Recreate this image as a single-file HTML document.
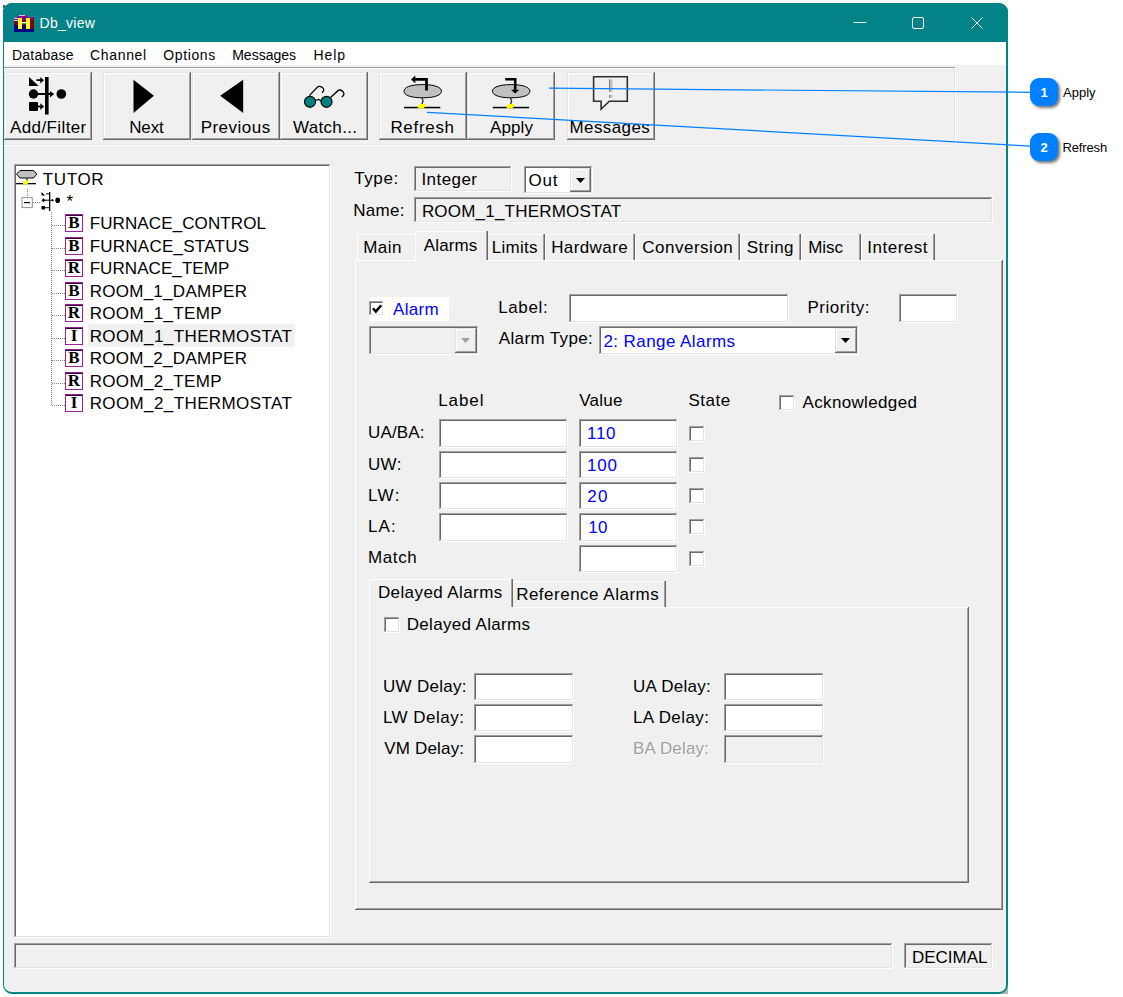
<!DOCTYPE html><html><head><meta charset="utf-8"><title>Db_view</title><style>
html,body{margin:0;padding:0;background:#fff;}
body{width:1123px;height:997px;position:relative;overflow:hidden;font-family:"Liberation Sans",sans-serif;font-size:17px;color:#000;}
div,span,svg{position:absolute;box-sizing:border-box;}
.t{white-space:nowrap;line-height:20px;height:20px;}
.win{left:3px;top:3px;width:1005px;height:991px;background:#f0f0f0;border-radius:9px;overflow:hidden;}
.winb{left:3px;top:3px;width:1005px;height:991px;border:1px solid #038387;border-right-width:2px;border-bottom-width:2px;border-radius:9px;}
.title{left:0;top:0;width:1005px;height:39px;background:#038387;}
.menu{left:0;top:39px;width:1005px;height:22.5px;background:#fff;}
.sunk{box-shadow:inset -1px -1px 0 #fff,inset 1px 1px 0 #a0a0a0,inset -2px -2px 0 #e3e3e3,inset 2px 2px 0 #696969;}
.w{background:#fff;}
.g{background:#f0f0f0;}
.btn{background:#f0f0f0;box-shadow:inset -1px -1px 0 #696969,inset 1px 1px 0 #e3e3e3,inset -2px -2px 0 #a0a0a0,inset 2px 2px 0 #fff;}
.cb{background:#fff;box-shadow:inset -1px -1px 0 #fff,inset 1px 1px 0 #a0a0a0,inset -2px -2px 0 #e3e3e3,inset 2px 2px 0 #696969;}
.panel{background:#f0f0f0;box-shadow:inset -1px -1px 0 #696969,inset 1px 1px 0 #fff,inset -2px -2px 0 #a0a0a0;}
.tabr{box-shadow:inset -1px 0 0 #696969,inset -2px 0 0 #a0a0a0,inset 0 1px 0 #fff, inset 1px 0 0 #fff;background:#f0f0f0;}
.tabl{box-shadow:inset 0 1px 0 #fff, inset 1px 0 0 #fff;background:#f0f0f0;}
.ic{background:#fff;border:1px solid #9a1f9a;box-shadow:inset 0 1px 0 #300030;font-family:"Liberation Serif",serif;font-weight:bold;font-size:17px;line-height:16px;text-align:center;color:#000;}
.dot{border-top:1px dotted #808080;height:0;}
.vdot{border-left:1px dotted #808080;width:0;}
.call{background:#0080ff;border-radius:9px;box-shadow:2px 2px 3px rgba(0,0,0,.55);color:#fff;font-weight:bold;font-size:13px;text-align:center;line-height:29px;}
</style></head><body>
<div class="" style="left:1001px;top:987px;width:7px;height:7px;background:#b4b4b4;"></div>
<div class="" style="left:3px;top:5px;width:2px;height:3px;background:#554;"></div>
<div class="win"><div class="title"></div><div class="menu"></div></div>
<svg style="left:14px;top:12px" width="20" height="20" viewBox="0 0 20 20" shape-rendering="crispEdges">
<rect width="20" height="20" fill="#008080"/>
<path d="M5 3h6l2 2h7v3H0V6h3z" fill="#8b008b"/>
<rect x="5" y="3" width="6" height="1" fill="#f0c0f0"/>
<rect x="0" y="6" width="4" height="1" fill="#f0c0f0"/>
<rect x="0" y="8" width="20" height="5" fill="#800000"/>
<rect x="0" y="13" width="20" height="7" fill="#000080"/>
<rect x="16" y="7" width="4" height="10" fill="#800000"/>
<rect x="0" y="8" width="4" height="1" fill="#f0c0f0"/>
<rect x="4" y="6" width="4" height="11" fill="#ffff00"/>
<rect x="12" y="6" width="4" height="11" fill="#ffff00"/>
<rect x="8" y="9" width="4" height="1" fill="#800000"/>
<rect x="8" y="10" width="4" height="1" fill="#fff"/>
<rect x="8" y="11" width="4" height="1" fill="#40a040"/>
<rect x="6" y="8" width="1" height="8" fill="#ffffc0"/>
<rect x="14" y="8" width="1" height="8" fill="#ffffc0"/>
</svg>
<span class="t" style="left:39.58px;top:13px;font-size:14px;color:#fff;letter-spacing:0.26px;">Db_view</span>
<svg style="left:850px;top:10px" width="150" height="30" viewBox="0 0 150 30" fill="none" stroke="#fff" stroke-width="1">
<path d="M3.500 12.500h13"/>
<rect x="62.500" y="7.500" width="11" height="11" rx="1.500"/>
<path d="M121.500 7.500l11 11M132.500 7.500l-11 11"/>
</svg>
<span class="t" style="left:11.88px;top:45px;font-size:14px;letter-spacing:0.25px;">Database</span>
<span class="t" style="left:90.10px;top:45px;font-size:14px;letter-spacing:0.65px;">Channel</span>
<span class="t" style="left:163.17px;top:45px;font-size:14px;letter-spacing:0.65px;">Options</span>
<span class="t" style="left:232.18px;top:45px;font-size:14px;letter-spacing:0.01px;">Messages</span>
<span class="t" style="left:313.38px;top:45px;font-size:14px;letter-spacing:0.94px;">Help</span>
<div class="" style="left:4px;top:67px;width:951px;height:1px;background:#a0a0a0;"></div>
<div class="" style="left:4px;top:68px;width:950px;height:1px;background:#fbfbfb;"></div>
<div class="" style="left:954px;top:68px;width:1px;height:77px;background:#e0e0e0;"></div>
<div class="" style="left:4px;top:144px;width:951px;height:1px;background:#e4e4e4;"></div>
<div class="" style="left:4px;top:145px;width:952px;height:1px;background:#fff;"></div>
<div class="" style="left:955px;top:67px;width:1px;height:79px;background:#fff;"></div>
<div class="btn" style="left:4px;top:72px;width:88px;height:68px;"></div>
<span class="t" style="left:10.00px;top:118px;letter-spacing:0.39px;">Add/Filter</span>
<div class="btn" style="left:103px;top:72px;width:88px;height:68px;"></div>
<span class="t" style="left:129.14px;top:118px;letter-spacing:-0.11px;">Next</span>
<div class="btn" style="left:191.5px;top:72px;width:88px;height:68px;"></div>
<span class="t" style="left:200.64px;top:118px;letter-spacing:0.48px;">Previous</span>
<div class="btn" style="left:280px;top:72px;width:88px;height:68px;"></div>
<span class="t" style="left:293.00px;top:118px;letter-spacing:0.32px;">Watch...</span>
<div class="btn" style="left:379px;top:72px;width:88px;height:68px;"></div>
<span class="t" style="left:390.39px;top:118px;letter-spacing:0.69px;">Refresh</span>
<div class="btn" style="left:467px;top:72px;width:88px;height:68px;"></div>
<span class="t" style="left:490.00px;top:118px;letter-spacing:0.12px;">Apply</span>
<div class="btn" style="left:567px;top:72px;width:88px;height:68px;"></div>
<span class="t" style="left:569.44px;top:118px;letter-spacing:0.42px;">Messages</span>
<svg style="left:0;top:60px" width="700" height="70" viewBox="0 60 700 70">
<g fill="#000">
<path d="M29 77v9h9.700z"/>
<rect x="36.500" y="79.200" width="5" height="1.800"/>
<path d="M40.300 77l3.600 3.200-3.600 3.200z"/>
<rect x="45" y="77" width="3.600" height="37.500"/>
<circle cx="33.500" cy="94" r="4.700"/>
<rect x="37" y="93" width="14" height="2"/>
<path d="M50 91l4.200 3-4.200 3.500z"/>
<circle cx="61.300" cy="94" r="4.800"/>
<rect x="29" y="102" width="9" height="9" rx="1"/>
<rect x="37" y="105.600" width="4" height="1.800"/>
<path d="M40.300 103.300l3.800 3.200-3.800 3.500z"/>
<path d="M133.500 79.800v33.300l20.400-17.400z"/>
<path d="M243.200 79.800v33.300l-23-17.400z"/>
</g>
<g fill="none" stroke="#000" stroke-width="1.300">
<path d="M309.300 95.600l8.700-9q3-1 5 1.500t-1 4.500"/>
<path d="M330.500 97.400l8-7.200q3-.8 4.800 2t-1.600 4.800"/>
<path d="M315.500 100.500l3-1 4 2"/>
</g>
<circle cx="310" cy="101.800" r="5.500" fill="#008080" stroke="#000" stroke-width="1.200"/>
<circle cx="326.500" cy="101.800" r="5.500" fill="#008080" stroke="#000" stroke-width="1.200"/>

<path d="M404.0 91.2C404.0 87.6 409.7 84.6 422.7 84.6C435.7 84.6 441.4 87.6 441.4 91.2C441.4 94.8 435.7 97.8 422.7 97.8C409.7 97.8 404.0 94.8 404.0 91.2Z" fill="#c0c0c0" stroke="#000" stroke-width="1"/>
<path d="M426.500 90.600v-11.300h-12" fill="none" stroke="#000" stroke-width="2.800"/>
<path d="M415.300 75.600v7.600l-4.300-3.800z" fill="#000"/>
<path d="M422 98l1 3-1 3" fill="none" stroke="#303030" stroke-width="1.400"/>
<rect x="404" y="106.800" width="36.300" height="1.500" fill="#000"/>
<path d="M419.400 104h7.100l-2.800 4.400h-6.200z" fill="#ffff00"/>

<path d="M492.5 91.2C492.5 87.6 498.2 84.6 511.2 84.6C524.2 84.6 529.9 87.6 529.9 91.2C529.9 94.8 524.2 97.8 511.2 97.8C498.2 97.8 492.5 94.8 492.5 91.2Z" fill="#c0c0c0" stroke="#000" stroke-width="1"/>
<path d="M505.200 79.300h10v11" fill="none" stroke="#000" stroke-width="2.600"/>
<path d="M511 89.800h8.200l-4.100 3.800z" fill="#000"/>
<path d="M510.600 98l1 3-1 3" fill="none" stroke="#303030" stroke-width="1.400"/>
<rect x="492.800" y="106.800" width="36.300" height="1.500" fill="#000"/>
<path d="M508 104h7l-2.500 4.400h-6.300z" fill="#ffff00"/>

<path d="M593.600 76.700h33.700v24.500h-18l-8.200 8v-8h-7.500z" fill="none" stroke="#303030" stroke-width="1.600"/>
<rect x="609" y="79.400" width="1.500" height="12.400" fill="#808080"/><rect x="610.500" y="79.400" width="2" height="12.400" fill="#c0c0c0"/>
<rect x="609" y="95" width="1.500" height="2.800" fill="#808080"/><rect x="610.500" y="95" width="2" height="2.800" fill="#c0c0c0"/>
</svg>
<div class="sunk w" style="left:14px;top:164px;width:317px;height:774px;"></div>
<svg style="left:14px;top:166px" width="60" height="50" viewBox="14 166 60 50">
<path d="M20 170.500h13.500l3.300 3.700-3.300 3.800H20l-3.500-3.800z" fill="#c0c0c0" stroke="#000" stroke-width="1"/>
<rect x="26.300" y="178" width="1.300" height="3" fill="#303030"/>
<rect x="16" y="183" width="20" height="1.300" fill="#000"/>
<path d="M24.300 180.500h4.700l-1.600 4.100h-4.700z" fill="#ffff00"/>
<path d="M27.500 189v8" stroke="#808080" stroke-width="1" stroke-dasharray="1 1" fill="none"/>
<path d="M33 202.500h8" stroke="#808080" stroke-width="1" stroke-dasharray="1 1" fill="none"/>
<rect x="22" y="197.600" width="10.300" height="10" fill="#fff" stroke="#919191" stroke-width="1"/>
<rect x="24" y="202" width="6" height="1.200" fill="#000"/>
<g fill="#000">
<path d="M41.500 192v3.500h3.700z"/>
<rect x="46" y="193.300" width="3" height="1"/>
<rect x="49" y="192" width="1.300" height="19"/>
<path d="M41.500 200.200l2-2 2 2-2 2z"/>
<rect x="45" y="199.700" width="8" height="1"/>
<path d="M52 198.700l2 1.500-2 1.500z"/>
<ellipse cx="57.700" cy="200.200" rx="2.400" ry="2.800"/>
<rect x="41.500" y="206" width="3.500" height="3.500"/>
<rect x="45" y="207.200" width="4" height="1"/>
</g>
</svg>
<span class="t" style="left:42.86px;top:170px;letter-spacing:0.60px;">TUTOR</span>
<span class="t" style="left:66.55px;top:192px;letter-spacing:0.35px;">*</span>
<div class="ic" style="left:65px;top:214px;width:18px;height:18px;">B</div>
<div class="dot" style="left:52px;top:225px;width:13px;height:0px;"></div>
<span class="t" style="left:89.64px;top:214px;letter-spacing:0.12px;">FURNACE_CONTROL</span>
<div class="ic" style="left:65px;top:237px;width:18px;height:18px;">B</div>
<div class="dot" style="left:52px;top:248px;width:13px;height:0px;"></div>
<span class="t" style="left:89.64px;top:237px;letter-spacing:0.25px;">FURNACE_STATUS</span>
<div class="ic" style="left:65px;top:259px;width:18px;height:18px;">R</div>
<div class="dot" style="left:52px;top:270px;width:13px;height:0px;"></div>
<span class="t" style="left:89.64px;top:259px;letter-spacing:0.08px;">FURNACE_TEMP</span>
<div class="ic" style="left:65px;top:282px;width:18px;height:18px;">B</div>
<div class="dot" style="left:52px;top:293px;width:13px;height:0px;"></div>
<span class="t" style="left:89.64px;top:282px;letter-spacing:0.28px;">ROOM_1_DAMPER</span>
<div class="ic" style="left:65px;top:304px;width:18px;height:18px;">R</div>
<div class="dot" style="left:52px;top:315px;width:13px;height:0px;"></div>
<span class="t" style="left:89.64px;top:304px;letter-spacing:0.35px;">ROOM_1_TEMP</span>
<div class="" style="left:88px;top:324px;width:207px;height:23px;background:#f0f0f0;"></div>
<div class="ic" style="left:65px;top:327px;width:18px;height:18px;">I</div>
<div class="dot" style="left:52px;top:338px;width:13px;height:0px;"></div>
<span class="t" style="left:89.64px;top:327px;letter-spacing:0.40px;">ROOM_1_THERMOSTAT</span>
<div class="ic" style="left:65px;top:349px;width:18px;height:18px;">B</div>
<div class="dot" style="left:52px;top:360px;width:13px;height:0px;"></div>
<span class="t" style="left:89.64px;top:349px;letter-spacing:0.28px;">ROOM_2_DAMPER</span>
<div class="ic" style="left:65px;top:372px;width:18px;height:18px;">R</div>
<div class="dot" style="left:52px;top:383px;width:13px;height:0px;"></div>
<span class="t" style="left:89.64px;top:372px;letter-spacing:0.35px;">ROOM_2_TEMP</span>
<div class="ic" style="left:65px;top:394px;width:18px;height:18px;">I</div>
<div class="dot" style="left:52px;top:405px;width:13px;height:0px;"></div>
<span class="t" style="left:89.64px;top:394px;letter-spacing:0.40px;">ROOM_2_THERMOSTAT</span>
<div class="vdot" style="left:51px;top:212px;width:0px;height:193px;"></div>
<span class="t" style="left:354.16px;top:169px;letter-spacing:0.62px;">Type:</span>
<span class="t" style="left:353.14px;top:201px;letter-spacing:0.31px;">Name:</span>
<div class="sunk g" style="left:414px;top:166px;width:98px;height:26px;"></div>
<span class="t" style="left:421.47px;top:170px;letter-spacing:0.43px;">Integer</span>
<div class="sunk w" style="left:524px;top:166px;width:69px;height:28px;"></div>
<span class="t" style="left:528.49px;top:171px;letter-spacing:0.82px;">Out</span>
<div class="btn" style="left:570px;top:168px;width:21px;height:24px;"></div>
<svg style="left:576px;top:178px" width="9" height="5" viewBox="0 0 9 5"><path d="M0 0h9L4.500 5z" fill="#000"/></svg>
<div class="sunk g" style="left:414px;top:197px;width:579px;height:26px;"></div>
<span class="t" style="left:421.89px;top:202px;letter-spacing:0.21px;">ROOM_1_THERMOSTAT</span>
<div class="panel" style="left:355px;top:260px;width:648px;height:650px;"></div>
<div class="tabl" style="left:357px;top:234px;width:57.5px;height:26px;"></div>
<span class="t" style="left:363.14px;top:238px;letter-spacing:0.53px;">Main</span>
<div class="tabr" style="left:487px;top:234px;width:57.5px;height:26px;"></div>
<span class="t" style="left:491.64px;top:238px;letter-spacing:0.32px;">Limits</span>
<div class="tabr" style="left:544.5px;top:234px;width:90.0px;height:26px;"></div>
<span class="t" style="left:551.14px;top:238px;letter-spacing:0.41px;">Hardware</span>
<div class="tabr" style="left:634.5px;top:234px;width:105.0px;height:26px;"></div>
<span class="t" style="left:642.15px;top:238px;letter-spacing:0.52px;">Conversion</span>
<div class="tabr" style="left:739.5px;top:234px;width:61.0px;height:26px;"></div>
<span class="t" style="left:746.74px;top:238px;letter-spacing:0.48px;">String</span>
<div class="tabr" style="left:800.5px;top:234px;width:60.0px;height:26px;"></div>
<span class="t" style="left:808.14px;top:238px;letter-spacing:-0.05px;">Misc</span>
<div class="tabr" style="left:860.5px;top:234px;width:74.0px;height:26px;"></div>
<span class="t" style="left:867.22px;top:238px;letter-spacing:0.52px;">Interest</span>
<div class="tabr" style="left:415px;top:231px;width:73px;height:29px;"></div>
<div class="g" style="left:416px;top:260px;width:70px;height:1px;"></div>
<span class="t" style="left:423.75px;top:236px;letter-spacing:0.14px;">Alarms</span>
<div class="w" style="left:369px;top:297px;width:80px;height:24px;"></div>
<div class="cb" style="left:369px;top:301px;width:15px;height:15px;"></div>
<svg style="left:371px;top:303px" width="12" height="12" viewBox="371 303 12 12"><path d="M373 308.300l2.800 3.300 5.400-6.400" fill="none" stroke="#000" stroke-width="2.400"/></svg>
<span class="t" style="left:393.00px;top:300px;color:#0000ff;letter-spacing:0.29px;">Alarm</span>
<div class="sunk g" style="left:369px;top:326px;width:110px;height:29px;"></div>
<div class="btn" style="left:455px;top:328px;width:22px;height:25px;"></div>
<svg style="left:461px;top:338px" width="9" height="5" viewBox="0 0 9 5"><path d="M0 0h9L4.500 5z" fill="#a0a0a0"/></svg>
<span class="t" style="left:498.14px;top:298px;letter-spacing:0.66px;">Label:</span>
<div class="sunk w" style="left:569px;top:294px;width:220px;height:29px;"></div>
<span class="t" style="left:807.39px;top:298px;letter-spacing:0.56px;">Priority:</span>
<div class="sunk w" style="left:899px;top:294px;width:59px;height:29px;"></div>
<span class="t" style="left:498.75px;top:329px;letter-spacing:0.36px;">Alarm Type:</span>
<div class="sunk w" style="left:599px;top:326px;width:260px;height:29px;"></div>
<span class="t" style="left:603.40px;top:332px;color:#0000ff;letter-spacing:0.43px;">2: Range Alarms</span>
<div class="btn" style="left:835px;top:328px;width:22px;height:25px;"></div>
<svg style="left:841px;top:338px" width="9" height="5" viewBox="0 0 9 5"><path d="M0 0h9L4.500 5z" fill="#000"/></svg>
<span class="t" style="left:438.14px;top:391px;letter-spacing:0.95px;">Label</span>
<span class="t" style="left:579.25px;top:391px;letter-spacing:0.26px;">Value</span>
<span class="t" style="left:688.49px;top:391px;letter-spacing:0.50px;">State</span>
<div class="cb" style="left:779px;top:395px;width:16px;height:16px;"></div>
<span class="t" style="left:802.50px;top:393px;letter-spacing:0.35px;">Acknowledged</span>
<span class="t" style="left:367.98px;top:423px;letter-spacing:0.16px;">UA/BA:</span>
<div class="sunk w" style="left:439px;top:419px;width:129px;height:29px;"></div>
<div class="sunk w" style="left:579px;top:419px;width:99px;height:29px;"></div>
<span class="t" style="left:586.98px;top:424px;color:#0000ff;letter-spacing:0.75px;">110</span>
<div class="cb" style="left:689px;top:426px;width:16px;height:16px;"></div>
<span class="t" style="left:367.98px;top:455px;letter-spacing:0.37px;">UW:</span>
<div class="sunk w" style="left:439px;top:451px;width:129px;height:28px;"></div>
<div class="sunk w" style="left:579px;top:451px;width:99px;height:28px;"></div>
<span class="t" style="left:586.98px;top:456px;color:#0000ff;letter-spacing:0.78px;">100</span>
<div class="cb" style="left:689px;top:457px;width:16px;height:16px;"></div>
<span class="t" style="left:367.89px;top:486px;letter-spacing:1.45px;">LW:</span>
<div class="sunk w" style="left:439px;top:482px;width:129px;height:28px;"></div>
<div class="sunk w" style="left:579px;top:482px;width:99px;height:28px;"></div>
<span class="t" style="left:587.15px;top:487px;color:#0000ff;letter-spacing:1.33px;">20</span>
<div class="cb" style="left:689px;top:488px;width:16px;height:16px;"></div>
<span class="t" style="left:367.89px;top:517px;letter-spacing:1.15px;">LA:</span>
<div class="sunk w" style="left:439px;top:513px;width:129px;height:29px;"></div>
<div class="sunk w" style="left:579px;top:513px;width:99px;height:29px;"></div>
<span class="t" style="left:588.23px;top:518px;color:#0000ff;letter-spacing:0.25px;">10</span>
<div class="cb" style="left:689px;top:519px;width:16px;height:16px;"></div>
<span class="t" style="left:367.89px;top:548px;letter-spacing:0.66px;">Match</span>
<div class="sunk w" style="left:579px;top:545px;width:99px;height:28px;"></div>
<div class="cb" style="left:689px;top:551px;width:16px;height:16px;"></div>
<div class="panel" style="left:369px;top:607px;width:600px;height:276px;"></div>
<div class="tabr" style="left:512px;top:581px;width:154px;height:26px;"></div>
<span class="t" style="left:516.14px;top:585px;letter-spacing:0.50px;">Reference Alarms</span>
<div class="tabr" style="left:369px;top:579px;width:144px;height:28px;"></div>
<div class="g" style="left:370px;top:607px;width:141px;height:1px;"></div>
<span class="t" style="left:377.89px;top:583px;letter-spacing:0.41px;">Delayed Alarms</span>
<div class="cb" style="left:384px;top:617px;width:16px;height:16px;"></div>
<span class="t" style="left:406.64px;top:615px;letter-spacing:0.34px;">Delayed Alarms</span>
<span class="t" style="left:382.98px;top:677px;letter-spacing:0.29px;">UW Delay:</span>
<div class="sunk w" style="left:474px;top:673px;width:100px;height:28px;"></div>
<span class="t" style="left:632.98px;top:677px;letter-spacing:0.27px;">UA Delay:</span>
<div class="sunk w" style="left:724px;top:673px;width:100px;height:28px;"></div>
<span class="t" style="left:382.89px;top:708px;letter-spacing:0.49px;">LW Delay:</span>
<div class="sunk w" style="left:474px;top:704px;width:100px;height:28px;"></div>
<span class="t" style="left:632.89px;top:708px;letter-spacing:0.41px;">LA Delay:</span>
<div class="sunk w" style="left:724px;top:704px;width:100px;height:28px;"></div>
<span class="t" style="left:384.25px;top:739px;letter-spacing:0.17px;">VM Delay:</span>
<div class="sunk w" style="left:474px;top:735px;width:100px;height:29px;"></div>
<span class="t" style="left:632.89px;top:739px;color:#a0a0a0;letter-spacing:0.18px;text-shadow:1px 1px 0 #fff;">BA Delay:</span>
<div class="sunk g" style="left:724px;top:735px;width:100px;height:29px;"></div>
<div class="sunk g" style="left:14px;top:943px;width:879px;height:26px;"></div>
<div class="sunk g" style="left:904px;top:943px;width:89px;height:26px;"></div>
<span class="t" style="left:911.89px;top:948px;">DECIMAL</span>
<div class="winb"></div>
<svg style="left:0;top:0" width="1123" height="997" viewBox="0 0 1123 997">
<path d="M549 88.200L1031 92.300M427 112.300L1031 146.200" stroke="#0080ff" stroke-width="1.200" fill="none"/>
</svg>
<div class="call" style="left:1030px;top:78px;width:28px;height:28px;">1</div>
<div class="call" style="left:1030px;top:133px;width:28px;height:28px;">2</div>
<span class="t" style="left:1063.00px;top:83px;font-size:13px;letter-spacing:0.02px;">Apply</span>
<span class="t" style="left:1062.46px;top:138px;font-size:13px;letter-spacing:-0.13px;">Refresh</span>
</body></html>
